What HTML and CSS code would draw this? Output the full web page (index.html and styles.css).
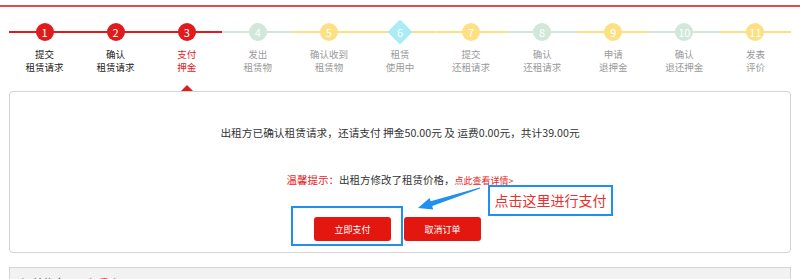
FILE: index.html
```html
<!DOCTYPE html>
<html lang="zh-CN">
<head>
    <meta charset="UTF-8">
    <title>支付押金</title>
    <link rel="stylesheet" href="styles.css">
</head>
<body>
    <div class="topline"></div>

    <div class="steps">
        <div class="step done red-line">
            <div class="dot-row"><span class="dot">1</span></div>
            <p>提交<br>租赁请求</p>
        </div>
        <div class="step done red-line">
            <div class="dot-row"><span class="dot">2</span></div>
            <p>确认<br>租赁请求</p>
        </div>
        <div class="step current red-line">
            <div class="dot-row"><span class="dot">3</span></div>
            <p>支付<br>押金</p>
            <span class="pointer"></span>
        </div>
        <div class="step green">
            <div class="dot-row"><span class="dot">4</span></div>
            <p>发出<br>租赁物</p>
        </div>
        <div class="step yellow">
            <div class="dot-row"><span class="dot">5</span></div>
            <p>确认收到<br>租赁物</p>
        </div>
        <div class="step cyan">
            <div class="dot-row"><span class="dot diamond">6</span></div>
            <p>租赁<br>使用中</p>
        </div>
        <div class="step yellow">
            <div class="dot-row"><span class="dot">7</span></div>
            <p>提交<br>还租请求</p>
        </div>
        <div class="step green">
            <div class="dot-row"><span class="dot">8</span></div>
            <p>确认<br>还租请求</p>
        </div>
        <div class="step yellow">
            <div class="dot-row"><span class="dot">9</span></div>
            <p>申请<br>退押金</p>
        </div>
        <div class="step green">
            <div class="dot-row"><span class="dot">10</span></div>
            <p>确认<br>退还押金</p>
        </div>
        <div class="step yellow">
            <div class="dot-row"><span class="dot">11</span></div>
            <p>发表<br>评价</p>
        </div>
    </div>

    <div class="pay-box">
        <p class="summary">出租方已确认租赁请求，还请支付 押金50.00元 及 运费0.00元，共计39.00元</p>
        <p class="notice"><span class="tip">温馨提示：</span>出租方修改了租赁价格，<a href="#" class="detail">点此查看详情&gt;</a></p>
        <div class="actions">
            <button class="btn">立即支付</button>
            <button class="btn">取消订单</button>
        </div>

        <!-- annotation drawn over the screenshot -->
        <div class="mark"></div>
        <svg class="arrow" width="70" height="26" viewBox="0 0 70 26">
            <polygon points="3,23 18.2,24.4 17.2,21.1 65.2,3.6 64.8,2.4 15.6,16.3 14.6,13 " fill="#1f8ff0"/>
        </svg>
        <div class="callout">点击这里进行支付</div>
    </div>

    <div class="order-info">
        <span class="tab">订单信息</span>
        <span class="tab red">租赁合同</span>
    </div>
</body>
</html>
```

FILE: styles.css
```css
*, *::before, *::after{
    margin: 0;
    padding: 0;
    box-sizing: border-box;
}

body{
    font-family: "Noto Sans CJK SC", "Liberation Sans", sans-serif;
    color: #333;
    background: #fff;
    padding-top: 5px;
}

.topline{
    height: 2px;
    background-color: #e64a4a;
}

/* progress steps */
.steps{
    display: grid;
    grid-template-columns: repeat(11, 1fr);
    margin: 16px 9px 0;
    align-items: start;
}
.step{
    display: flex;
    flex-direction: column;
    align-items: center;
    --c: #fde083;
}
.dot-row{
    width: 100%;
    height: 18px;
    display: flex;
    justify-content: center;
    background: linear-gradient(var(--c), var(--c)) center / 100% 2px no-repeat;
}
.dot{
    width: 18px;
    height: 18px;
    border-radius: 50%;
    background-color: var(--c);
    color: #fff;
    font-size: 11px;
    line-height: 18px;
    text-align: center;
}
.diamond{
    width: 25px;
    height: 25px;
    margin-top: -3.5px;
    border-radius: 0;
    line-height: 25px;
    clip-path: polygon(50% 0, 100% 50%, 50% 100%, 0 50%);
}
.step p{
    margin-top: 7px;
    font-size: 9.5px;
    line-height: 13px;
    text-align: center;
    color: #9a9a9a;
}
.red-line{ --c: #e01b1b; }
.green{ --c: #d0e7da; }
.yellow{ --c: #fde083; }
.cyan{ --c: #a9ecf6; }
.cyan .dot-row{
    background-image: linear-gradient(#fde083, #fde083);
}
.step.done p{ color: #222; }
.step.current p{ color: #e01b1b; }

.pointer{
    margin-top: 11px;
    width: 0;
    height: 0;
    border-left: 6px solid transparent;
    border-right: 6px solid transparent;
    border-bottom: 6px solid #e01b1b;
}

/* payment box */
.pay-box{
    position: relative;
    margin: 0 9px;
    height: 162px;
    border: 1px solid #d4d4d4;
    border-radius: 4px;
    padding-top: 31px;
    text-align: center;
}
.summary{
    font-size: 10.7px;
    line-height: 20px;
    color: #333;
}
.notice{
    margin-top: 27px;
    font-size: 10.5px;
    line-height: 20px;
    color: #333;
}
.tip{
    color: #e81c1c;
}
.detail{
    color: #e81c1c;
    font-size: 9px;
    text-decoration: none;
}
.actions{
    margin-top: 26px;
    display: flex;
    justify-content: center;
    gap: 13px;
    padding-right: 5px;
}
.btn{
    width: 77px;
    height: 24px;
    border: 0;
    border-radius: 3px;
    background-color: #e3170f;
    color: #fff;
    font-family: inherit;
    font-size: 9px;
}

.mark{
    position: absolute;
    left: 281px;
    top: 114px;
    width: 112px;
    height: 40px;
    border: 2px solid #1f8ff0;
}
.arrow{
    position: absolute;
    left: 405px;
    top: 93px;
}
.callout{
    position: absolute;
    left: 478px;
    top: 93px;
    width: 125px;
    height: 31px;
    border: 2px solid #1f8ff0;
    background: #fff;
    color: #ec3030;
    font-size: 14px;
    line-height: 26px;
    text-align: center;
}

/* order tabs */
.order-info{
    margin: 14px 9px 0;
    height: 40px;
    border: 1px solid #d4d4d4;
    background-color: #f2f2f2;
    padding: 8px 0 0 11px;
    display: flex;
    gap: 22px;
}
.tab{
    font-size: 11px;
    line-height: 14px;
    color: #222;
}
.tab.red{
    color: #e81c1c;
}
```
